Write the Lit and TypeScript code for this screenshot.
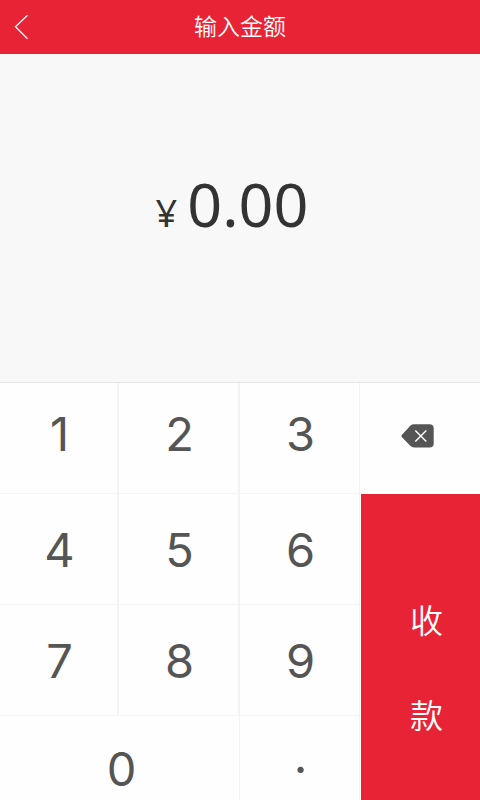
import { LitElement, html, css } from "lit";
import { customElement, state } from "lit/decorators.js";

const KEYS = ["1", "2", "3", "4", "5", "6", "7", "8", "9", "0", "·"];

@customElement("app-root")
export class AppRoot extends LitElement {
  @state() private entry = "";

  static styles = css`
    :host {
      display: flex;
      flex-direction: column;
      min-height: 100vh;
      background: #fefefe;
      font-family: "Noto Sans", "Noto Sans CJK SC", sans-serif;
    }
    button {
      margin: 0;
      padding: 0;
      border: 0;
      background: none;
      color: inherit;
      font: inherit;
      cursor: pointer;
    }
    svg {
      display: block;
    }
    .bar {
      display: grid;
      grid-template-columns: 48px 1fr 48px;
      align-items: center;
      height: 54px;
      background: #e82335;
      color: #fff;
    }
    .back {
      display: flex;
      align-items: center;
      height: 54px;
      padding-left: 14px;
    }
    .title {
      margin: 0;
      padding-bottom: 5px;
      text-align: center;
      font: 350 23px/32px "Noto Sans CJK SC", sans-serif;
    }
    .amount {
      flex: 1;
      display: flex;
      align-items: baseline;
      align-content: center;
      justify-content: center;
      flex-wrap: wrap;
      gap: 10px;
      padding: 0 16px 20px 0;
      background: #f8f8f8;
      color: #333;
    }
    .yen {
      font-size: 38px;
      line-height: 72px;
    }
    .value {
      font-size: 61px;
      line-height: 72px;
    }
    .pad {
      display: grid;
      grid-template-columns: 119fr 121fr 120fr 120fr;
      grid-template-rows: 111px 111px 111px 84px;
      border-top: 1px solid #e4e4e4;
      color: #555;
    }
    .key {
      padding: 2px 0 0 2px;
      border-right: 2px solid #f3f3f3;
      border-bottom: 1px solid #f5f5f5;
      font-family: Inter, sans-serif;
      font-weight: 370;
      font-size: 47px;
      line-height: 56px;
    }
    .top {
      padding-top: 0;
      padding-bottom: 8px;
    }
    .last {
      border-bottom: 0;
      border-right-width: 1px;
      padding-top: 22px;
    }
    .edge {
      border-right-width: 1px;
    }
    .zero {
      grid-column: span 2;
      padding-left: 4px;
    }
    .erase {
      grid-area: 1 / 4;
      display: flex;
      align-items: center;
      justify-content: center;
      padding: 0 6px 6px 0;
    }
    .pay {
      grid-area: 2 / 4 / 5 / 5;
      display: flex;
      flex-direction: column;
      align-items: center;
      justify-content: center;
      margin-left: 1px;
      padding: 40px 0 0 12px;
      background: #e82335;
      color: #fff;
      font: 350 33px/95px "Noto Sans CJK SC", sans-serif;
    }
  `;

  private press(key: string) {
    const next = this.entry + (key === "·" ? "." : key);
    if (/^\d{0,7}(\.\d{0,2})?$/.test(next)) this.entry = next;
  }

  private keyClass(i: number) {
    const names = ["key"];
    if (i < 3) names.push("top");
    if (i % 3 === 2) names.push("edge");
    if (i > 8) names.push("last");
    if (i === 9) names.push("zero");
    return names.join(" ");
  }

  render() {
    return html`
      <header class="bar">
        <button class="back" aria-label="返回">
          <svg width="15" height="26" viewBox="0 0 15 26" fill="none" stroke="#fff" stroke-width="1.3">
            <path d="M13.5 1.2 L1.5 12.8 L13.5 24.8" />
          </svg>
        </button>
        <h1 class="title">输入金额</h1>
      </header>
      <output class="amount">
        <span class="yen">¥</span>
        <span class="value">${Number(this.entry || 0).toFixed(2)}</span>
      </output>
      <div class="pad">
        ${KEYS.map(
          (k, i) => html`<button class=${this.keyClass(i)} @click=${() => this.press(k)}>${k}</button>`
        )}
        <button class="erase" aria-label="删除" @click=${() => (this.entry = this.entry.slice(0, -1))}>
          <svg width="33" height="24" viewBox="0 0 33 24">
            <path
              fill="#555"
              d="M0.8 11 L9.5 1.6 Q11 0.2 13 0.2 H28.5 Q32.7 0.2 32.7 4.2 V19.4 Q32.7 23.4 28.5 23.4 H13 Q11 23.4 9.5 22 L0.8 13 Q0 12 0.8 11 Z"
            />
            <path d="M14.3 6.5 L25.3 17.5 M25.3 6.5 L14.3 17.5" stroke="#fff" stroke-width="1.5" />
          </svg>
        </button>
        <button class="pay"><span>收</span><span>款</span></button>
      </div>
    `;
  }
}
